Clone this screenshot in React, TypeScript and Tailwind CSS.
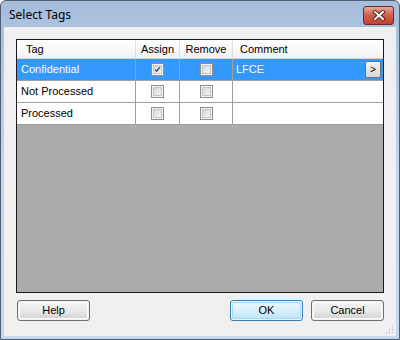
import React from "react";

const cols = ["w-[119px]", "w-[44px]", "w-[53px]", "flex-1"];

type Row = { tag: string; assign: boolean; remove: boolean; comment: string; selected?: boolean };

const rows: Row[] = [
  { tag: "Confidential", assign: true, remove: false, comment: "LFCE", selected: true },
  { tag: "Not Processed", assign: false, remove: false, comment: "" },
  { tag: "Processed", assign: false, remove: false, comment: "" },
];

const Check = ({ checked }: { checked: boolean }) => (
  <div className="w-[13px] h-[13px] border border-[#8e8f8f] bg-[#f4f4f4] p-[1px]">
    <div className="w-full h-full border border-[#c6c6c6] bg-gradient-to-br from-[#d6d6d6] to-[#f6f6f6] flex items-center justify-center">
      {checked && (
        <svg width="9" height="9" viewBox="0 0 9 9">
          <path d="M1.5 4.5 L3.5 6.8 L7.5 1.5" fill="none" stroke="#2f4178" strokeWidth="1.6" />
        </svg>
      )}
    </div>
  </div>
);

const Button = ({ label, primary }: { label: string; primary?: boolean }) => (
  <div
    className={`w-[73px] h-[21px] rounded-[3px] border ${
      primary ? "border-[#3c7fb1]" : "border-[#707070]"
    } p-px`}
  >
    <div
      className={`w-full h-full rounded-[2px] flex items-center justify-center text-black ${
        primary
          ? "bg-gradient-to-b from-[#eaf6fd] via-[#d9f0fc] to-[#bee6fd] border border-[#a7d8f6]"
          : "bg-gradient-to-b from-[#f2f2f2] via-[#ebebeb] to-[#d4d4d4] border border-[#fcfcfc]"
      }`}
    >
      {label}
    </div>
  </div>
);

export default function App() {
  return (
    <div className="w-[400px] h-[340px] bg-white font-['Liberation_Sans',Arial,sans-serif] text-[11px]">
      <div className="w-[400px] h-[340px] border border-[#4f5d70] rounded-t-[6px] bg-gradient-to-b from-[#a6bedc] via-[#c1d5ec] to-[#c4d8ee] flex flex-col px-[3px] pb-[3px]">
        {/* title bar */}
        <div className="h-[26px] flex items-start justify-between shrink-0">
          <span className="ml-[5px] mt-[5px] font-['Noto_Sans',sans-serif] text-[12px] text-black">Select Tags</span>
          <div className="mt-[5px] mr-[2px] w-[31px] h-[19px] rounded-[3px] border border-[#6b2a23] bg-gradient-to-b from-[#e9a898] via-[#cf5d4b] to-[#c0422f] flex items-center justify-center">
            <svg width="14" height="11" viewBox="0 0 14 11">
              <path d="M3 2 L11 9 M11 2 L3 9" stroke="#5a2018" strokeWidth="4" strokeLinecap="square" />
              <path d="M3 2 L11 9 M11 2 L3 9" stroke="#ffffff" strokeWidth="2" strokeLinecap="square" />
            </svg>
          </div>
        </div>

        {/* client */}
        <div className="relative flex-1 bg-[#f0f0f0] pt-[12px] flex flex-col">
          <div className="ml-[12px] w-[368px] h-[254px] border border-[#1a1a1a] bg-[#ababab] flex flex-col">
            {/* header */}
            <div className="h-[19px] flex bg-gradient-to-b from-white to-[#f1f2f4] border-b border-[#d5d5d5] text-black">
              <div className={`${cols[0]} border-r border-[#e0e0e0] pl-[9px] flex items-center`}>Tag</div>
              <div className={`${cols[1]} border-r border-[#e0e0e0] flex items-center justify-center`}>Assign</div>
              <div className={`${cols[2]} border-r border-[#e0e0e0] flex items-center justify-center`}>Remove</div>
              <div className={`${cols[3]} pl-[7px] flex items-center`}>Comment</div>
            </div>
            {rows.map((r) => (
              <div
                key={r.tag}
                className={`h-[22px] flex border-b border-[#a0a0a0] ${
                  r.selected ? "bg-[#3399ff] text-white" : "bg-white text-black"
                }`}
              >
                <div className={`${cols[0]} border-r border-[#a0a0a0] pl-[4px] flex items-center`}>{r.tag}</div>
                <div className={`${cols[1]} border-r border-[#a0a0a0] flex items-center justify-center`}>
                  <Check checked={r.assign} />
                </div>
                <div className={`${cols[2]} border-r border-[#a0a0a0] flex items-center justify-center`}>
                  <Check checked={r.remove} />
                </div>
                <div className={`${cols[3]} pl-[3px] pr-[2px] flex items-center justify-between`}>
                  <span>{r.comment}</span>
                  {r.selected && (
                    <div className="w-[16px] h-[17px] rounded-[2px] border border-[#707070] bg-gradient-to-b from-[#f4f4f4] to-[#d8d8d8] flex items-center justify-center text-black text-[10px] leading-none">
                      &gt;
                    </div>
                  )}
                </div>
              </div>
            ))}
          </div>

          {/* buttons */}
          <div className="mt-[7px] flex items-center justify-between pl-[13px] pr-[12px]">
            <Button label="Help" />
            <div className="flex gap-[8px]">
              <Button label="OK" primary />
              <Button label="Cancel" />
            </div>
          </div>

          {/* size grip */}
          <svg className="absolute right-[2px] bottom-[2px]" width="8" height="8" viewBox="0 0 8 8">
            <rect x="6" y="0" width="1" height="1" fill="#b0b0b0" />
            <rect x="3" y="3" width="1" height="1" fill="#b0b0b0" />
            <rect x="6" y="3" width="1" height="1" fill="#b0b0b0" />
            <rect x="0" y="6" width="1" height="1" fill="#b0b0b0" />
            <rect x="3" y="6" width="1" height="1" fill="#b0b0b0" />
            <rect x="6" y="6" width="1" height="1" fill="#b0b0b0" />
          </svg>
        </div>
      </div>
    </div>
  );
}
